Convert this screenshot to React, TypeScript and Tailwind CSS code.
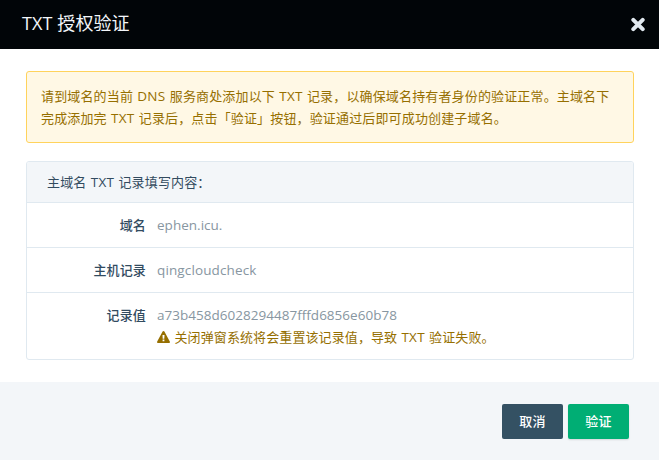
import type { ReactNode } from "react";

export default function App() {
  return (
    <div className="flex h-[460px] w-[659px] flex-col overflow-hidden bg-white font-['Open_Sans','Noto_Sans_CJK_SC',sans-serif] text-[13px] leading-[22px] tracking-[0.15px]">
      <header className="flex h-[49px] shrink-0 items-center justify-between bg-[#010508] pr-[13px] pl-[22px]">
        <h1 className="pb-[3px] text-[18px] tracking-[0.1px] text-[#f3f6f9]">TXT 授权验证</h1>
        <button aria-label="关闭" className="text-[#e1e9f0]">
          <svg width="16" height="16" viewBox="0 0 16 16" stroke="currentColor" strokeWidth="4" strokeLinecap="round">
            <path d="M3.3 2.8 12.7 12.2M12.7 2.8 3.3 12.2" />
          </svg>
        </button>
      </header>
      <main className="flex flex-1 flex-col pt-[22px] pr-[25px] pl-[26px]">
        <div className="h-[72px] rounded-[3px] border border-[#ffd35c] bg-[#fff8e5] pt-[13px] pl-[14px] whitespace-nowrap text-[#966f00]">
          <p>请到域名的当前 <En>DNS</En> 服务商处添加以下 <En>TXT</En> 记录，以确保域名持有者身份的验证正常。主域名下</p>
          <p>完成添加完 <En>TXT</En> 记录后，点击「验证」按钮，验证通过后即可成功创建子域名。</p>
        </div>
        <section className="mt-[18px] h-[199px] rounded-[3px] border border-[#e0e9f0]">
          <h2 className="h-[40px] rounded-t-[2px] bg-[#f3f6f9] px-[20px] pt-[9px] text-[#324b5f]">主域名 <En>TXT</En> 记录填写内容：</h2>
          <Row label="域名">ephen.icu.</Row>
          <Row label="主机记录"><span className="tracking-[0.13px]">qingcloudcheck</span></Row>
          <Row label="记录值">
            <p>a73b458d6028294487fffd6856e60b78</p>
            <p className="flex items-center text-[13px] tracking-[0.1px] text-[#966f00]">
              <svg className="mr-[4.5px]" width="13" height="12" viewBox="0 0 13 12">
                <path fill="currentColor" fillRule="evenodd" d="M6.5 0c.4 0 .7.2.9.5l5.4 9.9c.4.7-.1 1.5-.9 1.5H1.1c-.8 0-1.3-.8-.9-1.5L5.6.5c.2-.3.5-.5.9-.5ZM5.5 4l.2 3.7h1.6L7.5 4Zm.1 4.6v1.6h1.8V8.6Z" />
              </svg>
              <span>关闭弹窗系统将会重置该记录值，导致 <En>TXT</En> 验证失败。</span>
            </p>
          </Row>
        </section>
      </main>
      <footer className="flex h-[78px] shrink-0 justify-end gap-[5px] bg-[#f3f6f9] pt-[22px] pr-[30px] font-medium text-white">
        <button className="h-[35px] w-[61px] rounded-[2px] bg-[#345163] pb-px">取消</button>
        <button className="h-[35px] w-[61px] rounded-[2px] bg-[#00ae74] pb-px shadow-[0_1px_2px_rgba(0,0,0,0.12)]">验证</button>
      </footer>
    </div>
  );
}

function En({ children }: { children: ReactNode }) {
  return <span className="mx-[0.7px] text-[13.5px] leading-none tracking-[0.3px]">{children}</span>;
}

function Row({ label, children }: { label: string; children: ReactNode }) {
  return (
    <div className="flex h-[45px] border-t border-[#e0e9f0] pt-[11px]">
      <div className="w-[119px] text-right font-medium text-[#324b5f]">{label}</div>
      <div className="ml-[11px] text-[13.5px] tracking-[0.02px] whitespace-nowrap text-[#8796a1]">{children}</div>
    </div>
  );
}
